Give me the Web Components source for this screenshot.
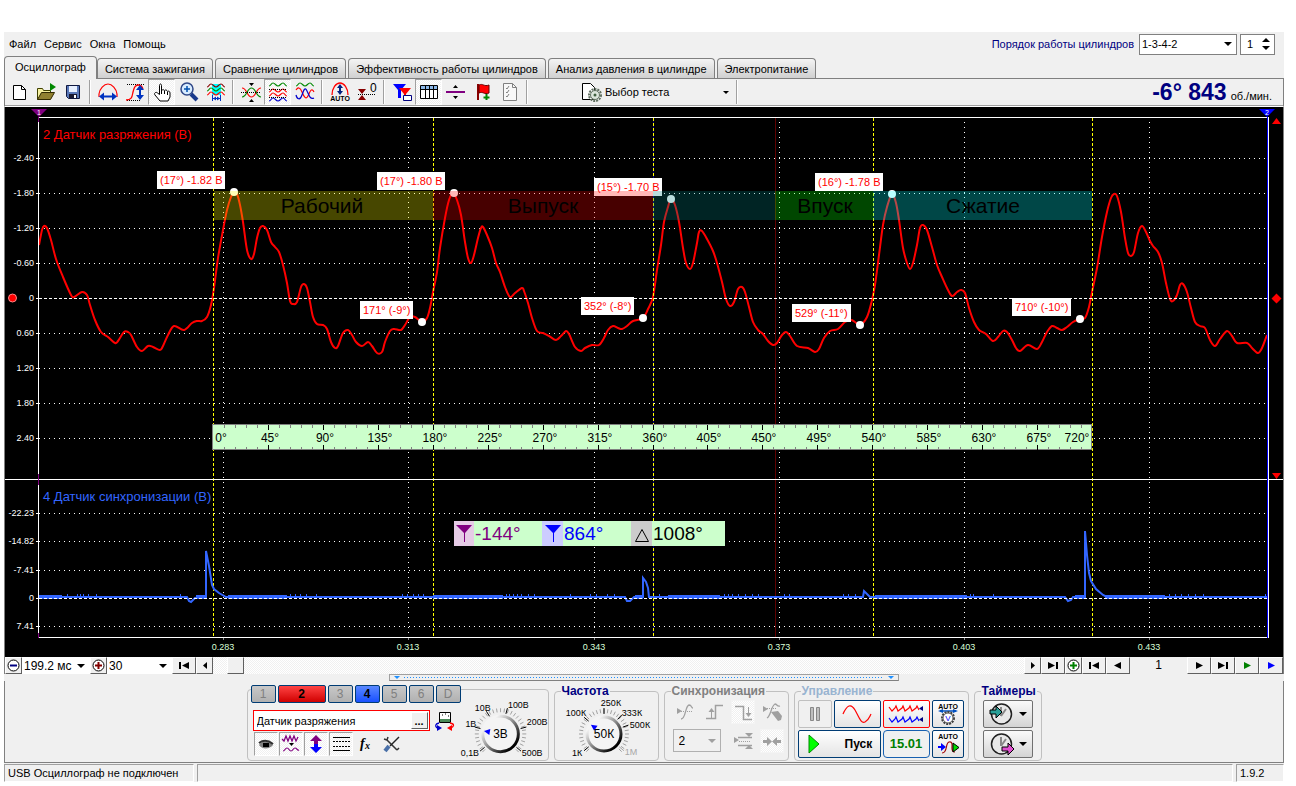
<!DOCTYPE html>
<html lang="ru">
<head>
<meta charset="utf-8">
<title>USB Осциллограф</title>
<style>
body{margin:32px 12px 4px 4px;background:#fff;font-family:"Liberation Sans",Arial,sans-serif;font-size:11px;line-height:14px;color:#000}
</style>
</head>
<body>
<osc-app></osc-app>
<script>
const RESET = `*{box-sizing:border-box}button,select,input{font:inherit;color:inherit;margin:0;border-radius:0}button{padding:0;background:none;border:0}svg{display:block}`;
const HATCH = `repeating-conic-gradient(#fff 0 25%,#f0f0f0 0 50%) 0 0/2px 2px`;
function define(name, css, html, setup) {
  customElements.define(name, class extends HTMLElement {
    constructor() { super(); this.attachShadow({mode: 'open'}); }
    connectedCallback() {
      const body = typeof html === 'function' ? html(this) : html;
      this.shadowRoot.innerHTML = `<style>${RESET}:host{display:block}${css}</style>${body}`;
      if (setup) setup(this.shadowRoot, this);
    }
  });
}
const S = (d, c = '#000', w = 1, extra = '') => `<path d="${d}" fill="none" stroke="${c}" stroke-width="${w}" ${extra}/>`;
const F = (d, c = '#000') => `<path d="${d}" fill="${c}"/>`;
const wave = (y, c) => S(`M3 ${y + 1}c2 0 2-3 4-3s3 3 5 3 3-3 5-3 2 3 4 3`, c, 1.2);
const GEAR = (x, y, r, c) => `<circle cx="${x}" cy="${y}" r="${r}" fill="none" stroke="${c}" stroke-width="2" stroke-dasharray="2 1"/>`;
const ICONS = {
  new: `<path d="M6.500 5.500h8l4 4v10h-12z" fill="#fff" stroke="#000"/>` + S('M14.500 5.500v4h4'),
  open: `<path d="M3.500 19.500v-11h5l1 2h7v3" fill="#f5f0a0" stroke="#404000"/><path d="M3.500 19.500l4-7h13l-4 7z" fill="#908030" stroke="#302800"/>` + F('M16 3l6 4-6 4z', '#080'),
  save: `<path d="M5.500 5.500h13v13h-11l-2-2z" fill="#5a78b8" stroke="#101840"/>` + F('M8 6h8v6H8z', '#e8f0ff') + F('M8 14h8v4H8z', '#181830') + F('M13 15h2v3h-2z', '#fff'),
  arcw: S('M3 17V14C3.500 9 8 4 12 4s8.500 5 9 10v3', '#f00', 1.2) + F('M3 16.500l5-4v3h8v-3l5 4-5 4v-3H8v3z', '#0033c0'),
  arch: S('M4 4.500h17M4 20.500h13', '#000', 1, 'stroke-dasharray="1 1"') + S('M3 20c6 0 6-3 7-8s2-7 5-7 4 1 5 4', '#f00', 1.3) + F('M17 5l4 5h-3v5h3l-4 5-4-5h3v-5h-3z', '#0033c0'),
  hand: `<path d="M9.500 14.500V5.500c0-2 2-2 2 0v5c1-1 2.500-1 3 0 1-1 2.500-.5 3 1 1-1 2.500 0 2.500 1.500v4l-2 4h-8l-5-6c-1.500-2 1-3.500 2.500-2z" fill="#fff" stroke="#000"/>` + S('M11.500 10v4M14.500 11v3M17.500 12v3'),
  mag: S('M14 14l6 6', '#1a3a8c', 4) + `<circle cx="10" cy="9" r="6" fill="#d8ecff" stroke="#304888" stroke-width="1.500"/>` + S('M10 6v6M7 9h6', '#0050b0', 1.5),
  fit: F('M8 4h9v11H8z', '#0ff') + wave(6, '#800') + wave(10, '#080') + wave(14, '#f00') + S('M8.500 15v6M16.500 15v6M9 18.500h7', '#0033c0') + F('M9 18.500l3-2v4zM16 18.500l-3-2v4z', '#0033c0'),
  cross: S('M3 8c5 0 5 9 9.500 9S17 8 22 8', '#f00', 1.2) + S('M3 17c5 0 5-9 9.500-9S17 17 22 17', '#080', 1.2) + S('M2 12.500h20', '#000', 1, 'stroke-dasharray="1 1"') + F('M10 3h5l-2.500 3zM10 22h5l-2.500-3z'),
  waves: wave(5, '#080') + wave(11, '#f00') + wave(15, '#f00') + wave(20, '#00c') + S('M3 9.500h18', '#000', 1, 'stroke-dasharray="1 1"') + S('M3 17.500h18', '#000', 1, 'stroke-dasharray="1 1"'),
  waves2: wave(5, '#080') + S('M3 10c2-3 4-3 6 2s4 8 6 4 3-9 6-4', '#f00', 1.2) + S('M3 15c1 4 4 6 6 0s3-8 5-4 3 9 7 7', '#00c', 1.2),
  auto: S('M4 15C4 8 8 3 12 3s8 5 8 12', '#f00', 1.3) + F('M12 4l3 4h-2v3h2l-3 4-3-4h2V8H9z', '#002080') + `<text x="12" y="21" font-size="7" font-weight="700" text-anchor="middle">AUTO</text>`,
  zero: F('M3 9h8l-4 5zM3 20h8l-4-5z', '#800') + S('M3 14.500h18', '#000', 1, 'stroke-dasharray="1 1"') + `<text x="15" y="12" font-size="12">0</text>`,
  marks: F('M3 4h13l-5 6v8h-3v-8z', '#00f') + F('M9 8h12l-5 6v6h-2v-6z', '#f00') + `<path d="M13.500 15.500h8v5h-8z" fill="#fff" stroke="#000080"/>`,
  table: `<path d="M3.500 5.500h17v13h-17z" fill="#fff" stroke="#000"/>` + F('M4 6h16v3H4z', '#8cb8e8') + S('M4 9.500h16M8.500 6v12M12.500 6v12M16.500 6v12'),
  split: F('M2 11h19v2H2z', '#800080') + F('M9 8h5l-2.500-3zM9 16h5l-2.500 3z'),
  flag: F('M6 4h2v16H6z', '#800') + `<path d="M8 5c4-2 5 2 10 0v8c-5 2-6-2-10 0z" fill="#f00" stroke="#600"/>` + S('M15.500 14v6M12.500 17.500h6', '#080', 2),
  list: `<path d="M5.500 3.500h9l4 4v13h-13z" fill="#f8f8f8" stroke="#808080"/>` + S('M14.500 3.500v4h4M8 8l1 1 2-3M8 12l1 1 2-3M8 16l1 1 2-3', '#808080'),
  eye: F('M5 13c4-5 9-5 14 0-3 4-11 5-14 0z', '#808080') + F('M9 11h6v4H9z') + S('M5 11c4-3 9-3 14 1', '#303030', 2),
  zig: S('M3 7l2 2 2-5 2 5 2-5 2 5 2-5 2 5 2-4', '#800080', 1.3) + S('M4 19c2 0 2-3 4-3s2 3 4 3 2-3 4-3 2 3 4 2', '#800080', 1.2) + F('M10 11h5l-2.500 3z'),
  updown: F('M12 3l6 6h-4v3h-4V9H6z', '#800080') + F('M12 21l6-6h-4v-3h-4v3H6z', '#00f'),
  lines: S('M4 5.500h17M4 18.500h17') + S('M4 9.500h17M4 14.500h17', '#000', 1, 'stroke-dasharray="2 1"'),
  fx: `<text x="6" y="16" font-size="14" font-style="italic" font-weight="700" font-family="Liberation Serif,serif">f</text><text x="11" y="17" font-size="10" font-style="italic" font-weight="700" font-family="Liberation Serif,serif">x</text>`,
  tools: S('M8 8l10 10M5 7l3 1 1-3M18 18l2-2', '#333', 1.5) + S('M20 5l-9 9', '#222', 1.5) + S('M10 14l-4 5', '#4a70a8', 4),
  probe: `<path d="M7.500 3.500h11v10h-11z" fill="#fff" stroke="#000"/>` + F('M8 10h10v3H8z', '#4a8a58') + S('M10 6h1M13 5h1M16 7h1') + S('M7 14c-4 1-4 3-2 5', '#00c', 1.3) + S('M18 14c5 1 4 3 1 5', '#f00', 1.3) + F('M5 16l5 3-5 3z', '#00c') + F('M20 16l-5 3 5 3z', '#f00'),
  sine: F('M4 8l5 3-5 3z', '#a0a0a0') + S('M4 11.500h16', '#a0a0a0', 1, 'stroke-dasharray="1 1"') + S('M8 19c5 0 4-13 8-14 3 0 2 3 4 3', '#a0a0a0', 1.3),
  rise: S('M4 18.500h9.500v-13H21', '#a0a0a0', 1.5) + F('M9.500 8l3 4h-6z', '#a0a0a0') + S('M9.500 10v8', '#a0a0a0'),
  fall: S('M4 6.500h8.500v13H21', '#a0a0a0', 1.5) + F('M17.500 17l3-4h-6z', '#a0a0a0') + S('M17.500 7v8', '#a0a0a0'),
  handsync: S('M3 8.500h14', '#a0a0a0', 1, 'stroke-dasharray="1 1"') + F('M3 6l5 3-5 3zM11 12l7-1 4 5-1 4-3 1z', '#a0a0a0') + S('M7 18c4-2 4-12 8-14 2 0 2 3 5 2', '#a0a0a0', 1.3),
  window: F('M3 8l5 3-5 3zM14 4h8l-4 4zM14 20h8l-4-4z', '#a0a0a0') + S('M7 8.500h14M7 16.500h14', '#a0a0a0', 1.5) + S('M8 12.500h12', '#a0a0a0', 1, 'stroke-dasharray="1 1"'),
  meet: F('M3 11h4V8l5 4.500L7 17v-3H3zM21 11h-4V8l-5 4.500 5 4.500v-3h4z', '#a0a0a0'),
  gears: `<path d="M3.500 3.500h8l4 4v12h-12z" fill="#fff" stroke="#000"/>` + GEAR(16, 15, 6, '#607060') + `<circle cx="16" cy="15" r="4.500" fill="#dce6dc" stroke="#607060"/><circle cx="16" cy="15" r="1.500" fill="#406040"/>`,
};
const icon = (n, size = 24) => `<svg width="${size}" height="${size}" viewBox="0 0 24 24" aria-hidden="true">${ICONS[n]}</svg>`;

define('osc-tool', `
:host{flex:none}
button{width:27px;height:26px;display:grid;place-items:center}
svg{margin:-1px}
:host([small]) button{width:24px;height:24px}
:host([pressed]) button{background:${HATCH};border:1px solid;border-color:#a0a0a0 #fff #fff #a0a0a0}
:host([soft]) button{border-color:#f4f4f4}`,
el => `<button type="button" aria-label="${el.getAttribute('label')}">${icon(el.getAttribute('icon'))}</button>`);

define('osc-select', `
:host{position:relative}
select{appearance:none;width:100%;height:100%;background:#fff;border:0;padding:0 16px 0 2px;display:block}
:host([framed]) select{border:1px solid #808080}
:host([muted]) select{background:#f0f0f0;border-color:#b0b0b0;padding-left:5px}
i{position:absolute;right:5px;top:calc(50% - 2px);border:4px solid transparent;border-top-color:#000;border-bottom:0;pointer-events:none}
:host([muted]) i{border-top-color:#a0a0a0}`,
el => `<select aria-label="${el.getAttribute('label')}"><option>${el.getAttribute('value')}</option></select><i></i>`);

define('osc-menubar', `
:host{display:flex;align-items:center;height:24px;padding:0 9px 0 5px}
nav{display:flex;gap:8px;flex:1;line-height:16px}
label{color:#000080;margin-right:5px}
osc-select{width:98px;height:21px;margin-right:3px}
.spin{display:flex;width:35px;height:21px;border:1px solid #808080;background:#fff}
.spin input{width:19px;border:0;padding:0 0 0 6px;background:none}
.spin div{display:grid;width:12px;align-content:center;gap:3px}
.spin button{height:5px;display:grid;place-items:center}
`, `<nav aria-label="Меню"><button>Файл</button><button>Сервис</button><button>Окна</button><button>Помощь</button></nav>
<label for="order">Порядок работы цилиндров</label><osc-select id="order" framed label="Порядок работы цилиндров" value="1-3-4-2"></osc-select>
<div class="spin"><input aria-label="Номер цилиндра" value="1"><div><button aria-label="Больше"><svg width="8" height="4"><path d="M0 4h8l-4-4z"/></svg></button><button aria-label="Меньше"><svg width="8" height="4"><path d="M0 0h8l-4 4z"/></svg></button></div></div>`);

define('osc-tabs', `
:host{display:flex;align-items:flex-end;gap:2px;height:22px}
button{height:20px;padding:0 7px;border:1px solid #808080;border-bottom:0;border-radius:4px 4px 0 0;background:linear-gradient(#f4f4f4,#d0d0d0);white-space:nowrap}
button[aria-selected=true]{height:23px;margin:0 -2px -1px 0;padding:0 10px 2px;background:#f0f0f0;position:relative}`,
`<button role="tab" aria-selected="true">Осциллограф</button><button role="tab">Система зажигания</button><button role="tab">Сравнение цилиндров</button><button role="tab">Эффективность работы цилиндров</button><button role="tab">Анализ давления в цилиндре</button><button role="tab">Электропитание</button>`);

define('osc-toolbar', `
:host{display:flex;align-items:center;height:29px;border:1px solid #808080;border-bottom:1px solid #fff;box-shadow:inset 0 -1px #a0a0a0;padding-bottom:1px}
hr{width:2px;height:24px;margin:0 3px;border:0;border-left:1px solid #a0a0a0;border-right:1px solid #fff;flex:none}
.test{display:flex;align-items:center;width:202px;height:26px;padding:0 4px 0 48px;gap:2px}
.test span{flex:1;text-align:left}
.test i{border:3px solid transparent;border-top:3px solid #000;border-bottom:0}
output{margin-left:auto;margin-right:11px;color:#000080;white-space:nowrap}
b{font-size:23px;line-height:26px}
small{font-size:11px;color:#000;margin-left:4px}`,
() => {
  const t = (i, l, p) => `<osc-tool icon="${i}" label="${l}" ${p ? 'pressed' : ''}></osc-tool>`;
  return t('new', 'Новый') + t('open', 'Открыть') + t('save', 'Сохранить') + '<hr>' +
    t('arcw', 'Ширина') + t('arch', 'Высота') + t('hand', 'Рука', 1) + t('mag', 'Лупа') + t('fit', 'Вписать') + '<hr>' +
    t('cross', 'Совместить') + t('waves', 'Разделить', 1) + t('waves2', 'Наложить') + '<hr>' +
    t('auto', 'Авто') + t('zero', 'Ноль') + '<hr>' +
    t('marks', 'Маркеры') + t('table', 'Таблица', 1) + t('split', 'Разделитель') + t('flag', 'Флаг') + t('list', 'Список') + '<hr>' +
    `<button class="test">${icon('gears')}<span>Выбор теста</span><i></i></button><hr><output><b>-6° 843</b><small>об./мин.</small></output>`;
});

/* Channel 2 trace, in chart coordinates */
const TRACE = `39,245 42,230 44,226 47,228 51,240 56,259 63,277 71,295 74,297 82,292 87,295 90,305 95,320 101,332 108,337 115,343 118,341 124,332 128,332 131,335 137,347 142,351 148,346 153,347 160,350 163,346 168,335 174,326 184,330 192,323 197,321 202,321 207,317 211,305 214,288 218,258 223,230 227,210 231,197 234,192 237,194 240,205 243,222 247,250 251,259 254,254 257,238 260,228 263,226 267,230 271,242 275,247 279,252 283,265 287,283 290,301 293,304 297,302 301,287 304,284 307,288 310,302 313,317 317,324 323,325 327,329 331,342 335,348 338,346 343,333 348,330 352,335 356,342 362,346 368,342 372,346 377,353 382,352 385,342 390,331 394,329 401,330 405,325 410,317 415,317 422,322 427,318 430,308 433,292 437,272 440,248 445,218 449,200 453,193 457,200 461,215 465,242 468,258 471,263 474,255 478,238 481,228 483,227 487,235 492,248 496,263 500,272 505,287 510,297 515,293 522,288 524,291 528,303 532,318 537,331 543,333 549,336 556,340 561,336 566,331 569,334 575,347 581,351 585,348 592,345 599,345 604,338 608,330 613,326 618,328 622,329 627,326 633,321 643,318 648,309 653,297 657,270 661,245 664,222 668,207 671,199 675,205 679,222 683,248 686,263 690,269 693,263 697,243 699,232 702,231 707,239 713,251 717,263 722,282 726,299 730,306 734,302 738,289 742,287 745,292 749,307 753,322 758,330 763,334 768,341 773,345 777,343 782,335 786,332 790,336 797,346 808,348 815,352 819,349 824,338 830,331 838,329 845,322 851,320 855,322 860,325 867,317 872,300 875,285 879,255 883,225 887,207 892,194 896,203 899,220 903,248 907,263 910,269 913,263 917,245 920,228 923,225 927,230 932,247 937,265 942,277 947,288 952,296 957,292 961,290 965,293 969,308 974,322 979,330 986,334 993,341 998,337 1003,331 1007,332 1012,340 1016,348 1020,351 1028,345 1037,349 1042,342 1047,332 1052,326 1057,328 1062,330 1067,327 1073,322 1080,319 1085,318 1089,307 1092,292 1097,268 1102,237 1107,212 1111,198 1114,194 1117,196 1121,212 1125,238 1128,253 1131,256 1134,252 1138,233 1142,226 1146,232 1150,241 1153,246 1158,252 1162,263 1166,283 1170,299 1173,301 1177,295 1180,285 1183,284 1187,292 1191,308 1195,322 1200,326 1205,328 1210,340 1215,346 1220,339 1227,331 1232,336 1237,343 1247,343 1252,348 1258,353 1262,348 1267,335`;
function smooth(str) {
  const p = str.split(' ').map(s => s.split(',').map(Number));
  let d = `M${p[0]}`;
  for (let i = 0; i < p.length - 1; i++) {
    const a = p[i - 1] || p[i], b = p[i], c = p[i + 1], e = p[i + 2] || c;
    d += `C${b[0] + (c[0] - a[0]) / 6} ${b[1] + (c[1] - a[1]) / 6} ${c[0] - (e[0] - b[0]) / 6} ${c[1] - (e[1] - b[1]) / 6} ${c[0]} ${c[1]}`;
  }
  return d;
}
function chart() {
  const h = (y, dash, x1 = 39, x2 = 1267, c = '#fff') => `<path d="M${x1} ${y + .5}H${x2}" stroke="${c}" ${dash ? `stroke-dasharray="${dash}"` : ''}/>`;
  const v = (x, dash, y1 = 122, y2 = 637, c = '#fff') => `<path d="M${x + .5} ${y1}V${y2}" stroke="${c}" ${dash ? `stroke-dasharray="${dash}"` : ''}/>`;
  const txt = (x, y, s, size, c, anchor = 'start') => `<text x="${x}" y="${y}" font-size="${size}" fill="${c}" text-anchor="${anchor}">${s}</text>`;
  let s = '<g shape-rendering="crispEdges" fill="none">';
  [158, 193, 228, 263, 333, 368, 403, 438, 513, 541, 570, 626].forEach(y => s += h(y, '1 4') + h(y, '', 36, 39));
  [223, 408, 594, 779, 964, 1149].forEach(x => s += v(x, '1 4') + v(x, '', 637, 640, '#888'));
  s += v(653, '', 118, 637, '#000080') + v(775, '', 118, 637, '#600000');
  s += '</g>';
  s += `<path d="${smooth(TRACE)}" fill="none" stroke="#f00" stroke-width="2"/>`;
  s += '<g shape-rendering="crispEdges" fill="none">' + h(298, '3 2') + h(298, '', 36, 39);
  [213, 433, 653, 873, 1092].forEach(x => s += v(x, '3 2', 118, 637, '#ff0'));
  s += h(117) + h(479, '', 5, 1283) + h(637) + v(38, '', 117, 638) + v(38, '', 117, 122, '#800080') + v(38, '', 474, 485, '#800080') + v(38, '', 633, 638, '#800080') + v(1268, '', 117, 638) + v(1267, '', 117, 638, '#00f') + '</g>';
  /* channel 4 */
  s += '<g fill="none" stroke="#36f"><path stroke-width="2" d="M39 597H187L189 601 191 602 195 598 206 597V551L209 566 212 585 214 589 219 593 226 597H625L627 601 630 601 634 597H643V578L646 582 648 588 649 597H863L864 591 870 597H1065L1068 601 1071 600 1073 597H1085V531L1087 555 1089 573 1091 581 1096 589 1103 595 1107 597H1267"/><path stroke-width="4" d="M39 597H62M196 597H206M228 597H287M433 597H503M635 597H643M668 597H720M875 597H967M1075 597H1085M1105 597H1165"/><path d="';
  [67, 77, 80, 83, 88, 96, 180, 290, 295, 300, 306, 316, 402, 407, 413, 418, 423, 506, 509, 513, 517, 521, 528, 534, 570, 590, 596, 607, 614, 659, 724, 728, 732, 738, 745, 752, 758, 784, 789, 843, 848, 855, 970, 973, 993, 1169, 1175, 1181, 1188, 1195, 1203, 1265].forEach(x => s += `M${x + .5} 594V597`);
  s += '"/></g><g shape-rendering="crispEdges">' + h(598, '3 2') + h(598, '', 36, 39) + '</g>';
  /* point labels */
  [[157, 171, 68, '(17°) -1.82 В'], [377, 172, 68, '(17°) -1.80 В'], [594, 178, 68, '(15°) -1.70 В'], [815, 173, 68, '(16°) -1.78 В'], [360, 301, 53, '171° (-9°)'], [581, 297, 53, '352° (-8°)'], [792, 304, 59, '529° (-11°)'], [1012, 298, 59, '710° (-10°)']].forEach(([x, y, w, t]) => {
    s += `<rect x="${x}" y="${y}" width="${w}" height="18" fill="#fff"/>` + txt(x + 3, y + 13, t, 11, '#f00');
  });
  [[234, 192], [422, 322], [454, 193], [643, 318], [671, 199], [860, 325], [892, 194], [1080, 319]].forEach(([x, y]) => s += `<circle cx="${x}" cy="${y}" r="4" fill="#fff"/>`);
  /* strokes of the cycle */
  [[214, 219, '#ff0', 'Рабочий', 322], [433, 220, '#f00', 'Выпуск', 543], [653, 122, '#008080', '', 0], [775, 98, '#0f0', 'Впуск', 825], [873, 219, '#0ff', 'Сжатие', 983]].forEach(([x, w, c, t, m]) => {
    s += `<rect x="${x}" y="191" width="${w}" height="29" fill="${c}" fill-opacity=".28"/>` + (t ? txt(m, 213, t, 21, '#000', 'middle') : '');
  });
  /* degree ruler */
  s += '<rect x="212.5" y="424.5" width="879" height="25" fill="#cfc" stroke="#808080"/><g shape-rendering="crispEdges">';
  for (let i = 1; i < 80; i++) {
    const x = 213 + Math.round(i * 879 / 80), major = i % 5 === 0;
    s += v(x, '', 425, major ? 430 : 428, major ? '#000' : '#808080') + v(x, '', major ? 445 : 447, 450, major ? '#000' : '#808080');
  }
  s += '</g>';
  for (let i = 0; i <= 16; i++) s += txt(i === 0 ? 221 : i === 16 ? 1077 : 215 + Math.round(i * 879 / 16), 442, i * 45 + '°', 12, '#000', 'middle');
  /* cursor readout */
  s += '<path fill="#cfc" d="M454 521h271v25H454z"/><path fill="#e6cce6" d="M454 521h20v25h-20z"/><path fill="#ccf" d="M542 521h21v25h-21z"/><path fill="#ccc" d="M631 521h21v25h-21z"/><path fill="#800080" d="M456 525h16l-7 8v9h-1v-9z"/><path fill="#00f" d="M545 525h16l-7 8v9h-1v-9z"/><path fill="none" stroke="#000" d="M635.5 541.5h13l-6.500-12z"/>';
  s += txt(475, 540, '-144°', 19, '#800080') + txt(564, 540, '864°', 19, '#00f') + txt(653, 540, '1008°', 19, '#000');
  /* axis captions */
  [[161, '-2.40'], [196, '-1.80'], [231, '-1.20'], [266, '-0.60'], [301, '0'], [336, '0.60'], [371, '1.20'], [406, '1.80'], [441, '2.40'], [516, '-22.23'], [544, '-14.82'], [573, '-7.41'], [601, '0'], [629, '7.41']].forEach(([y, t]) => s += txt(34, y, t, 9, '#fff', 'end'));
  [[223, '0.283'], [408, '0.313'], [594, '0.343'], [779, '0.373'], [964, '0.403'], [1149, '0.433']].forEach(([x, t]) => s += txt(x, 650, t, 9, '#d8ffd8', 'middle'));
  s += txt(43, 139, '2 Датчик разряжения (В)', 13, '#f00') + txt(43, 501, '4 Датчик синхронизации (В)', 13, '#36f');
  /* edge markers */
  s += '<path fill="#800080" d="M31 109h16l-8 8z"/><path fill="#00f" d="M1259 109h16l-8 8z"/>' + txt(39, 115, '1', 7, '#fff', 'middle') + txt(1267, 115, '2', 7, '#fff', 'middle');
  s += '<path fill="#f00" d="M1272 124h9l-4.500-6zM1272 473h9l-4.500 6zM1276.500 293.500l5 5-5 5-5-5z"/><circle cx="12.500" cy="298" r="4" fill="#f00" stroke="#f88"/>';
  return `<svg viewBox="5 107 1278 550" role="img" aria-label="Осциллограмма">${s}</svg>`;
}
define('osc-chart', `:host{background:#000;border:solid #808080;border-width:0 1px}svg{width:100%;height:auto}`, chart);

define('osc-navbar', `
:host{display:flex;height:17px;background:${HATCH};border:solid #808080;border-width:0 1px}
button{height:17px;width:24px;flex:none;background:#f0f0f0;border:1px solid;border-color:#fff #606060 #606060 #fff;display:grid;place-items:center}
button.s{width:17px}
.z{width:68px}.n{width:65px}
osc-select{height:17px;background:#fff;font-size:12px;flex:none}
.track{flex:1;display:flex;padding-left:14px}
.page{display:flex;background:#f0f0f0;flex:none}
.page span{width:57px;text-align:center;font-size:12px;line-height:17px}`,
() => {
  const b = (l, d, c = '#000', cls = '') => `<button class="${cls}" aria-label="${l}"><svg width="14" height="11" viewBox="0 0 14 11"><path d="${d}" fill="${c}"/></svg></button>`;
  const zoom = (l, c, plus) => `<button class="s" aria-label="${l}"><svg width="13" height="13"><circle cx="6.500" cy="6.500" r="5.500" fill="#fff" stroke="#000"/><path d="M3 5.500h7v2H3z${plus ? 'M5.500 3h2v7h-2z' : ''}" fill="${c}"/></svg></button>`;
  const first = 'M2 2h2v7H2zM12 2v7L5 5.500z', last = 'M10 2h2v7h-2zM2 2v7l7-3.500z', prev = 'M10 2v7L3 5.500z', next = 'M4 2v7l7-3.500z';
  return zoom('Уменьшить', '#000080') + '<osc-select class="z" label="Развёртка" value="199.2 мс"></osc-select>' + zoom('Увеличить', '#800000', 1) +
    '<osc-select class="n" label="Масштаб" value="30"></osc-select>' + b('В начало', first) + b('Назад', 'M9 2v7L5 5.500z', '#000', 's') +
    '<div class="track"><button class="s" aria-label="Ползунок"></button></div>' + b('Вперёд', 'M5 2v7l4-3.500z', '#000', 's') + b('В конец', last) +
    '<div class="page">' + zoom('Добавить', '#008000', 1) + b('Первая', first) + b('Предыдущая', prev) + '<span>1</span>' + b('Следующая', next) + b('Последняя', last) + b('Пуск', next, '#008000') + b('Далее', next, '#00f') + '</div>';
});

define('osc-splitter', `
:host{display:flex;justify-content:center;height:7px}
div{width:510px;border:1px solid #a0a0a0;border-bottom-color:#808080;display:flex;align-items:center;gap:4px;padding:0 4px}
i{border:3px solid transparent;border-top:3px solid #1e90ff;border-bottom:0}
span{flex:1;height:1px;background:repeating-linear-gradient(90deg,#1e90ff 0 1px,transparent 1px 3px)}`,
`<div role="separator"><i></i><span></span><i></i></div>`);

define('osc-group', `
fieldset{margin:0;padding:0;border:1px solid #c0c0c0;border-radius:4px;height:76px;min-width:0}
legend{margin-left:6px;padding:0 1px;font-weight:700;font-size:12px;line-height:13px;color:var(--title,#000080)}`,
el => `<fieldset><legend>${el.getAttribute('label')}</legend><slot></slot></fieldset>`);

function knob(cx, cy, r, value, marks, ang) {
  let s = '';
  for (let a = -225; a <= 45; a += 9) {
    const t = a * Math.PI / 180, c = Math.cos(t), n = Math.sin(t);
    s += `<path d="M${cx + c * (r + 3)} ${cy + n * (r + 3)}L${cx + c * (r + 7)} ${cy + n * (r + 7)}" stroke="#a0a0a0"/>`;
  }
  marks.forEach(([x, y, t, a, c]) => {
    const q = a * Math.PI / 180, k = Math.cos(q), n = Math.sin(q);
    s += `<path d="M${cx + k * (r + 2)} ${cy + n * (r + 2)}L${cx + k * (r + 8)} ${cy + n * (r + 8)}" stroke="${c || '#000'}"/><text x="${x}" y="${y}" font-size="9" text-anchor="middle" fill="${c || '#000'}">${t}</text>`;
  });
  return `<defs><linearGradient id="k" x1="0" y1="0" x2="1" y2="1"><stop offset=".2" stop-color="#f4f4f4"/><stop offset=".5" stop-color="#888"/><stop offset=".85" stop-color="#000"/></linearGradient></defs>${s}<circle cx="${cx}" cy="${cy}" r="${r - 1}" fill="#f4f4f4" stroke="url(#k)" stroke-width="3"/><path fill="#00f" transform="translate(${cx} ${cy}) rotate(${ang})" d="M${r - 2} 0l-6 -3v6z"/><text x="${cx}" y="${cy + 4}" font-size="12" text-anchor="middle">${value}</text>`;
}

define('osc-channel', `
:host{display:flex;height:76px;position:relative}
:host::before{content:"";position:absolute;inset:4px 0 0 0;border:1px solid #c0c0c0;border-radius:4px}
.left{position:relative;width:212px;padding-left:4px}
.ch{display:flex;gap:2px;background:#f0f0f0;width:210px}
.ch button{width:25px;height:18px;border:1px solid #003c74;border-radius:2px;background:linear-gradient(#c8c8c8,#b0b0b0);color:#808080;font-size:12px}
.ch .r{width:48px;background:linear-gradient(#f44,#d00000);color:#000;font-weight:700}
.ch .b{background:linear-gradient(#5a88ff,#1850ff);color:#000;font-weight:700}
.name{display:flex;align-items:center;gap:2px;margin:7px 0 1px 2px;height:21px}
.box{display:flex;width:177px;height:21px;border:1px solid #f00;background:#fff;padding:1px}
.box input{flex:1;min-width:0;border:0;padding:0 0 0 2px;background:none}
.box button{width:17px;background:#f0f0f0;border:1px solid;border-color:#fff #606060 #606060 #fff;font-weight:700;line-height:10px}
.tools{display:flex;gap:1px;margin-left:3px}
svg.k{position:relative;width:91px;height:66px;margin-top:10px}`,
`<div class="left"><div class="ch"><button>1</button><button class="r">2</button><button>3</button><button class="b">4</button><button>5</button><button>6</button><button>D</button></div>
<div class="name"><div class="box"><input aria-label="Датчик" value="Датчик разряжения"><button>...</button></div>${icon('probe')}</div>
<div class="tools"><osc-tool small pressed icon="eye" label="Видимость"></osc-tool><osc-tool small pressed icon="zig" label="Фильтр"></osc-tool><osc-tool small pressed icon="updown" label="Инверсия"></osc-tool><osc-tool small pressed icon="lines" label="Уровни"></osc-tool><osc-tool small icon="fx" label="Функция"></osc-tool><osc-tool small icon="tools" label="Настройка"></osc-tool></div></div>
<svg class="k" viewBox="456 695 91 66" role="img" aria-label="Диапазон">${knob(498, 734, 19, '3В', [[467, 756, '0,1В', 140], [468, 727, '1В', 195], [480, 711, '10В', 238], [516, 708, '100В', 285], [535, 725, '200В', 345], [530, 756, '500В', 40]], 190)}</svg>`);

define('osc-freq', `svg{width:103px;height:62px}`,
`<svg viewBox="553 698 103 62" role="img" aria-label="Частота">${knob(602, 734, 18, '50К', [[575, 756, '1К', 140], [574, 716, '100К', 220], [609, 706, '250К', 270], [630, 716, '333К', 313], [638, 728, '500К', 340], [629, 755, '1М', 40, '#a8a8a8']], 215)}</svg>`);

define('osc-sync', `
:host{display:grid;grid-template-columns:repeat(4,24px);gap:5px;padding:2px 8px}
osc-select{grid-column:span 2;width:48px;height:23px;font-size:12px}`,
`<osc-tool small icon="sine" label="Уровень"></osc-tool><osc-tool small icon="rise" label="Фронт"></osc-tool><osc-tool small pressed soft icon="fall" label="Спад"></osc-tool><osc-tool small icon="handsync" label="Вручную"></osc-tool><osc-select framed muted label="Канал" value="2"></osc-select><osc-tool small icon="window" label="Окно"></osc-tool><osc-tool small pressed soft icon="meet" label="Центр"></osc-tool>`);

define('osc-control', `
:host{display:grid;grid-template-columns:34px 47px 47px 32px;grid-auto-rows:28px;gap:2px;padding:2px 3px}
button{border:1px solid #003c74;border-radius:2px;background:linear-gradient(#fff,#e4e4e4);display:grid;place-items:center}
.p{border-color:#c0c0c0;background:#f0f0f0}
.r{border-color:#f00}
.go{grid-column:span 2;display:flex;align-items:center;gap:25px;padding-left:9px;font-weight:700;font-size:12px}
.t{border-color:#1860b0;background:#f0f0f0;border-radius:4px;color:#008000;font-weight:700;font-size:13px}`,
`<button class="p" aria-label="Пауза"><svg width="14" height="16"><path d="M2.500 1.500h3v13h-3zM8.500 1.500h3v13h-3z" fill="#c0c0c0" stroke="#888"/></svg></button>
<button aria-label="Синус"><svg width="32" height="22">${S('M2 11C6 2 10 0 14 7s6 14 10 12 4-4 6-8', '#f00', 1.2)}</svg></button>
<button class="r" aria-label="Поток"><svg width="36" height="22">${S('M1 4l3 4 3-3 1-2 2 5 4-3 1-2 2 5 4-3 1-2 2 5 4-3 1-2 2 4', '#f00', 1.2)}${S('M1 15l3 4 3-3 1-2 2 5 4-3 1-2 2 5 4-3 1-2 2 5 4-3 1-2 2 4', '#00f', 1.2)}${F('M35 3v5l-4-2.500zM35 14v5l-4-2.500z', '#000080')}</svg></button>
<button aria-label="Авто В"><svg width="26" height="24"><text x="13" y="7" font-size="7" font-weight="700" text-anchor="middle">AUTO</text>${S('M5 9h16', '#0050c0', 1.5)}${F('M3 9l5-2v4zM23 9l-5-2v4z', '#0050c0')}${GEAR(13, 16, 6, '#404040')}<circle cx="13" cy="16" r="5" fill="#fff" stroke="#555"/><text x="13" y="19" font-size="8" fill="#00f" text-anchor="middle">V</text></svg></button>
<button class="go"><svg width="12" height="20"><path d="M1 1v18l10-9z" fill="#0f0" stroke="#080"/></svg>Пуск</button>
<button class="t">15.01</button>
<button aria-label="Авто пуск"><svg width="26" height="24"><text x="13" y="7" font-size="7" font-weight="700" text-anchor="middle">AUTO</text>${S('M7 21c6 0 3-10 7-11s3 4 3 6 1 4 3 4', '#a00000', 1.2)}${S('M3 15h4', '#00f', 2)}${F('M6 11l5 4-5 4z', '#00f')}<path d="M18 11v9l6-4.500z" fill="#0d0" stroke="#000"/></svg></button>`);

define('osc-timers', `
:host{display:grid;gap:2px;padding:2px 8px;grid-auto-rows:28px}
button{width:50px;border:1px solid #707070;border-radius:2px;background:linear-gradient(#fafafa,#d4d4d4);display:flex;align-items:center;justify-content:center;gap:4px}
i{border:4px solid transparent;border-top:4px solid #000;border-bottom:0}`,
() => ['M1 8h6V4l6 6-6 6v-4H1z|#2aa098', 'M13 15h6v-4l6 6-6 6v-4h-6z|#e050d0'].map((a, i) => {
  const [d, c] = a.split('|');
  return `<button aria-label="Таймер ${i + 1}"><svg width="26" height="24"><circle cx="12.500" cy="12" r="10" fill="#e8e8e8" stroke="#202020" stroke-width="1.500"/>${S('M12 14V5M12 14l5-7', '#888', 2)}<path d="${d}" fill="${c}" stroke="#000"/></svg><i></i></button>`;
}).join(''));

define('osc-panel', `
:host{display:flex;justify-content:center;align-items:flex-start;gap:5px;height:82px;padding-top:4px;border:solid #808080;border-width:0 1px 1px}
.a{width:302px}.b{width:105px}.c{width:125px;--title:#808080}.d{width:175px;--title:#99b4d1}.e{width:68px}`,
`<osc-channel class="a"></osc-channel><osc-group class="b" label="Частота"><osc-freq></osc-freq></osc-group><osc-group class="c" label="Синхронизация"><osc-sync></osc-sync></osc-group><osc-group class="d" label="Управление"><osc-control></osc-control></osc-group><osc-group class="e" label="Таймеры"><osc-timers></osc-timers></osc-group>`);

define('osc-status', `
:host{display:flex;gap:3px;height:18px;margin-top:1px}
span{border:1px solid;border-color:#a0a0a0 #fff #fff #a0a0a0;padding:0 3px;line-height:16px}
.m{width:190px}.x{flex:1}.v{width:48px}`,
`<span class="m">USB Осциллограф не подключен</span><span class="x"></span><span class="v">1.9.2</span>`);

define('osc-app', `:host{background:#f0f0f0}`,
`<osc-menubar></osc-menubar><osc-tabs role="tablist"></osc-tabs><osc-toolbar></osc-toolbar><osc-chart></osc-chart><osc-navbar></osc-navbar><osc-splitter></osc-splitter><osc-panel></osc-panel><osc-status></osc-status>`);
</script>
</body>
</html>
